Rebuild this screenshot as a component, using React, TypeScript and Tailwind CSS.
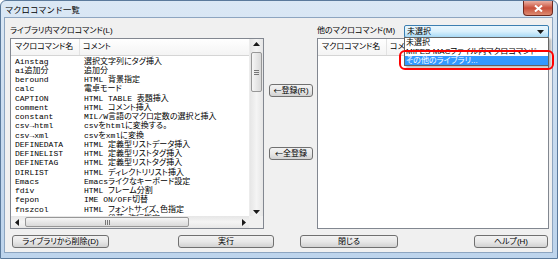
import React from 'react'

const rows: [string, string][] = [
  ['Ainstag', '選択文字列にタグ挿入'],
  ['ai追加分', '追加分'],
  ['beround', 'HTML 背景指定'],
  ['calc', '電卓モード'],
  ['CAPTION', 'HTML TABLE 表題挿入'],
  ['comment', 'HTML コメント挿入'],
  ['constant', 'MIL/W言語のマクロ定数の選択と挿入'],
  ['csv→html', 'csvをhtmlに変換する。'],
  ['csv→xml', 'csvをxmlに変換'],
  ['DEFINEDATA', 'HTML 定義型リストデータ挿入'],
  ['DEFINELIST', 'HTML 定義型リストタグ挿入'],
  ['DEFINETAG', 'HTML 定義型リストタグ挿入'],
  ['DIRLIST', 'HTML ディレクトリリスト挿入'],
  ['Emacs', 'Emacsライクなキーボード設定'],
  ['fdiv', 'HTML フレーム分割'],
  ['fepon', 'IME ON/OFF切替'],
  ['fnszcol', 'HTML フォントサイズ、色指定'],
  ['font', 'HTML 段落・改行指定'],
]

const ui = "font-['Liberation_Sans','Noto_Sans_CJK_JP',sans-serif]"

function Btn({ children, className = '' }: { children: React.ReactNode; className?: string }) {
  return (
    <div
      className={`h-[13px] flex items-center justify-center rounded-[3px] border border-[#707070] bg-gradient-to-b from-[#f2f2f2] via-[#e8e8e8] to-[#d2d2d2] leading-none ${ui} ${className}`}
    >
      {children}
    </div>
  )
}

function Arrow({ dir }: { dir: 'up' | 'down' | 'left' | 'right' }) {
  const pts = {
    up: '0,4 3.5,0 7,4',
    down: '0,0 3.5,4 7,0',
    left: '4,0 0,3.5 4,7',
    right: '0,0 4,3.5 0,7',
  }[dir]
  const vertical = dir === 'up' || dir === 'down'
  return (
    <svg width={vertical ? 7 : 4} height={vertical ? 4 : 7} viewBox={vertical ? '0 0 7 4' : '0 0 4 7'}>
      <polygon points={pts} fill="#1a1a1a" />
    </svg>
  )
}

function Header({ clip = false }: { clip?: boolean }) {
  return (
    <div className={`h-[17px] flex border-b border-[#d5d5d5] bg-gradient-to-b from-white to-[#f4f4f4] shrink-0 ${ui}`}>
      <div className="w-[69px] pl-[4px] flex items-center border-r border-[#e3e3e3]">マクロコマンド名</div>
      {clip ? (
        // the rest of this cell sits under the open combo popup
        <div className="w-[16px] ml-[3px] flex items-center overflow-hidden whitespace-nowrap">コメ</div>
      ) : (
        <div className="flex-1 pl-[3px] flex items-center">コメント</div>
      )}
    </div>
  )
}

export default function App() {
  return (
    <div className="relative w-[558px] h-[259px] bg-white overflow-hidden text-black text-[8px] font-['Liberation_Mono','Noto_Sans_CJK_JP',monospace] [font-feature-settings:'palt']">
      <div className="w-full h-full rounded-t-[6px] border border-[#5b7a9c] bg-gradient-to-b from-[#dbe8f5] via-[#c8dbef] to-[#bdd4ec] flex flex-col">
        {/* title bar */}
        <div className="h-[16px] shrink-0 flex items-start justify-between">
          <span className={`pl-[4px] pt-[3px] text-[8.3px] [font-feature-settings:normal] ${ui}`}>マクロコマンド一覧</span>
          <div className="w-[30px] h-[15px] mr-[4px] rounded-b-[4px] border border-t-0 border-[#6e2a20] bg-gradient-to-b from-[#eab0a4] via-[#c8503c] to-[#dd8a70] flex items-center justify-center">
            <svg width="9" height="7" viewBox="0 0 9 7">
              <path d="M1 0.5 L8 6.5 M8 0.5 L1 6.5" stroke="white" strokeWidth="2" />
            </svg>
          </div>
        </div>

        {/* client area */}
        <div className="flex-1 ml-[3px] mr-[4px] mb-[5px] border border-[#8da5c0] bg-[#f0f0f0] flex flex-col pl-[5px] pt-[6px]">
          <div className="flex">
            {/* left column */}
            <div className="w-[254px] flex flex-col">
              <div className={`h-[14px] flex items-center ${ui}`}>ライブラリ内マクロコマンド(L)</div>
              <div className="h-[191px] border border-[#828790] bg-white flex flex-col">
                <div className="flex flex-1 min-h-0">
                  <div className="w-[238px] flex flex-col overflow-hidden">
                    <Header />
                    <div className="pt-[1px]">
                      {rows.map(([name, comment]) => (
                        <div key={name} className="h-[9.25px] flex items-center leading-none whitespace-nowrap">
                          <div className="w-[69px] pl-[4px]">{name}</div>
                          <div className="pl-[4px]">{comment}</div>
                        </div>
                      ))}
                    </div>
                  </div>
                  {/* vertical scrollbar */}
                  <div className="w-[14px] bg-gradient-to-r from-[#e6e6e6] via-[#f4f4f4] to-[#e6e6e6] flex flex-col items-center border-l border-[#ececec]">
                    <div className="h-[10px] flex items-center justify-center">
                      <Arrow dir="up" />
                    </div>
                    <div className="mt-[3px] w-[11px] h-[40px] rounded-[2px] border border-[#979797] bg-gradient-to-r from-[#f6f6f6] to-[#d9d9d9] flex flex-col items-center justify-center gap-[1px]">
                      <div className="w-[5px] h-px bg-[#777]" />
                      <div className="w-[5px] h-px bg-[#777]" />
                      <div className="w-[5px] h-px bg-[#777]" />
                    </div>
                    <div className="flex-1" />
                    <div className="h-[9px] flex items-center justify-center">
                      <Arrow dir="down" />
                    </div>
                  </div>
                </div>
                {/* horizontal scrollbar */}
                <div className="h-[12px] flex shrink-0">
                  <div className="w-[238px] flex items-center bg-gradient-to-b from-[#e6e6e6] via-[#f4f4f4] to-[#e6e6e6]">
                    <div className="w-[11px] flex justify-center">
                      <Arrow dir="left" />
                    </div>
                    <div className="ml-[3px] w-[164px] h-[10px] rounded-[2px] border border-[#979797] bg-gradient-to-b from-[#f6f6f6] to-[#d9d9d9] flex items-center justify-center gap-[1px]">
                      <div className="w-px h-[5px] bg-[#777]" />
                      <div className="w-px h-[5px] bg-[#777]" />
                      <div className="w-px h-[5px] bg-[#777]" />
                    </div>
                    <div className="flex-1" />
                    <div className="w-[11px] flex justify-center">
                      <Arrow dir="right" />
                    </div>
                  </div>
                  <div className="flex-1 bg-[#f0f0f0]" />
                </div>
              </div>
            </div>

            {/* middle buttons */}
            <div className="w-[53px] flex flex-col pl-[5px]">
              <Btn className="mt-[60px] w-[44px]">
                <span className="font-['Noto_Sans_CJK_JP']">←</span>登録(R)
              </Btn>
              <Btn className="mt-[50px] w-[44px]">
                <span className="font-['Noto_Sans_CJK_JP']">←</span>全登録
              </Btn>
            </div>

            {/* right column */}
            <div className="w-[232px] flex flex-col">
              <div className={`h-[14px] flex items-center justify-between ${ui}`}>
                <span>他のマクロコマンド(M)</span>
                <div className="relative w-[145px] h-[13px] mt-[1px]">
                  <div className="h-full rounded-[2px] border border-[#3c7fb1] bg-gradient-to-b from-[#eaf6fd] via-[#d9f0fc] to-[#a7d9f5] flex items-center justify-between pl-[2px] pr-[4px]">
                    <span>未選択</span>
                    <Arrow dir="down" />
                  </div>
                  {/* dropdown popup */}
                  <div className="absolute left-0 top-[12px] w-[145px] bg-white border border-[#646464] shadow-[2px_2px_2px_rgba(0,0,0,0.25)] z-10 leading-none">
                    <div className="h-[9px] pl-[1px] flex items-center">未選択</div>
                    <div className="h-[9px] pl-[1px] flex items-center whitespace-nowrap">MIFES MACファイル内マクロコマンド</div>
                    <div className="h-[9px] pl-[1px] flex items-center bg-[#3399ff] text-white">その他のライブラリ...</div>
                  </div>
                </div>
              </div>
              <div className="h-[191px] border border-[#828790] bg-white flex flex-col">
                <Header clip />
              </div>
            </div>
          </div>

          {/* bottom buttons */}
          <div className="flex mt-[6px] pl-[2px]">
            <Btn className="w-[97px]">ライブラリから削除(D)</Btn>
            <Btn className="ml-[69px] w-[96px] border-[#3c7fb1]">実行</Btn>
            <Btn className="ml-[26px] w-[98px]">閉じる</Btn>
            <Btn className="ml-[76px] w-[74px]">ヘルプ(H)</Btn>
          </div>
        </div>
      </div>

      {/* red annotation */}
      <div className="absolute left-[399px] top-[50px] w-[155px] h-[20px] rounded-[6px] border-2 border-[#ff0000] z-20" />
    </div>
  )
}
